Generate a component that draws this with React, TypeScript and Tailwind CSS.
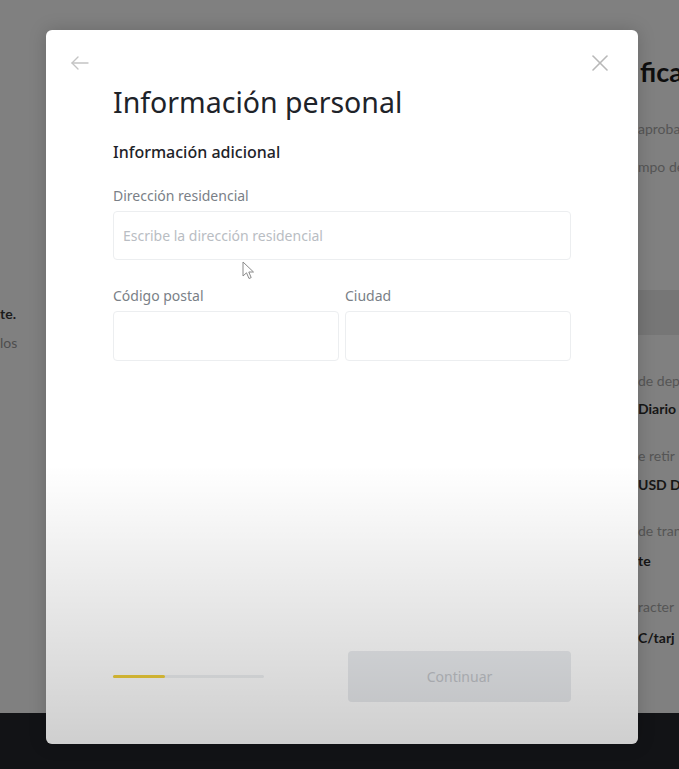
import React from "react";

const bgFont = { fontFamily: "Lato, 'Noto Sans', sans-serif" };
const uiFont = { fontFamily: "'Noto Sans', Inter, sans-serif" };

function BackArrow() {
  return (
    <svg width="24" height="24" viewBox="0 0 24 24" fill="none" stroke="#c4c4c4" strokeWidth="1.4" strokeLinecap="round" strokeLinejoin="round">
      <path d="M20 12H4" />
      <path d="M10 6l-6 6 6 6" />
    </svg>
  );
}

function CloseIcon() {
  return (
    <svg width="24" height="24" viewBox="0 0 24 24" fill="none" stroke="#b8b8b8" strokeWidth="1.6" strokeLinecap="round">
      <path d="M5 5l14 14" />
      <path d="M19 5L5 19" />
    </svg>
  );
}

function Cursor() {
  return (
    <svg width="14" height="20" viewBox="0 0 14 20">
      <path d="M1 1 L1 15 L4.5 11.8 L7 17.5 L9.2 16.6 L6.8 11 L11.5 11 Z" fill="#ffffff" stroke="#8a8a8a" strokeWidth="1" strokeLinejoin="round" />
    </svg>
  );
}

export default function App() {
  return (
    <div className="relative w-[679px] h-[769px] overflow-hidden flex flex-col" style={bgFont}>
      {/* background page (dimmed) */}
      <div className="relative flex-1 bg-[#808080] flex justify-between">
        <div className="pt-[304px] flex flex-col w-[40px]">
          <span className="text-[14px] leading-[20px] font-bold text-[#1c1c1c]">te.</span>
          <span className="mt-[9px] text-[14px] leading-[20px] text-[#4e4e4e]">los</span>
        </div>
        <div className="w-[41px] flex flex-col pt-[55px] whitespace-nowrap">
          <span className="text-[27px] leading-[34px] font-bold text-[#0e0e0e] pl-[2px]">fica</span>
          <span className="mt-[30px] text-[14px] leading-[20px] text-[#555]">aproba</span>
          <span className="mt-[18px] text-[14px] leading-[20px] text-[#555]">mpo de</span>
          <div className="mt-[113px] h-[45px] w-[41px] bg-[#767676]" />
          <span className="mt-[36px] text-[14px] leading-[20px] text-[#555]">de dep</span>
          <span className="mt-[8px] text-[14px] leading-[20px] font-bold text-[#161616]">Diario</span>
          <span className="mt-[27px] text-[14px] leading-[20px] text-[#555]">e retir</span>
          <span className="mt-[9px] text-[14px] leading-[20px] font-bold text-[#161616]">USD Di</span>
          <span className="mt-[26px] text-[14px] leading-[20px] text-[#555]">de tran</span>
          <span className="mt-[10px] text-[14px] leading-[20px] font-bold text-[#161616]">te</span>
          <span className="mt-[26px] text-[14px] leading-[20px] text-[#555]">racter</span>
          <span className="mt-[11px] text-[14px] leading-[20px] font-bold text-[#161616]">C/tarj</span>
        </div>
      </div>
      <div className="h-[56px] bg-[#121316]" />

      {/* modal */}
      <div
        className="absolute left-[46px] top-[30px] w-[592px] h-[714px] rounded-[6px] bg-white flex flex-col shadow-[0_0_18px_rgba(0,0,0,0.18)] overflow-hidden"
        style={uiFont}
      >
        <div className="mt-[21px] pl-[22px] pr-[26px] h-[24px] flex items-center justify-between">
          <BackArrow />
          <CloseIcon />
        </div>
        <div className="px-[67px] flex flex-col">
          <h1 className="mt-[8px] text-[28.5px] leading-[38px] font-normal text-[#1e2329]">Información personal</h1>
          <h2 className="mt-[19px] text-[16px] leading-[24px] font-medium text-[#1e2329]">Información adicional</h2>

          <label className="mt-[22px] text-[14px] leading-[20px] text-[#7a7f87]">Dirección residencial</label>
          <div className="relative mt-[5px] h-[49px] rounded-[4px] border border-[#eceef0] flex items-center px-[9px]">
            <span className="text-[14px] text-[#b9bdc3]">Escribe la dirección residencial</span>
          </div>

          <div className="mt-[26px] grid grid-cols-2 gap-[6px]">
            <div className="flex flex-col">
              <label className="text-[14px] leading-[20px] text-[#7a7f87]">Código postal</label>
              <div className="mt-[5px] h-[50px] rounded-[4px] border border-[#eceef0]" />
            </div>
            <div className="flex flex-col">
              <label className="text-[14px] leading-[20px] text-[#7a7f87]">Ciudad</label>
              <div className="mt-[5px] h-[50px] rounded-[4px] border border-[#eceef0]" />
            </div>
          </div>
        </div>

        <div className="mt-auto mb-[42px] px-[67px] flex items-center justify-between">
          <div className="w-[151px] h-[3px] rounded-full bg-[#eef0f2] flex">
            <div className="w-[52px] h-[3px] rounded-full bg-[#f0cf3a]" />
          </div>
          <button className="w-[223px] h-[51px] rounded-[4px] bg-[#eaecef] text-[14px] text-[#c2c5ca]">Continuar</button>
        </div>

        {/* video fade overlay */}
        <div className="pointer-events-none absolute inset-0 bg-[linear-gradient(to_bottom,rgba(0,0,0,0)_61%,rgba(0,0,0,0.19)_100%)]" />
      </div>

      {/* mouse cursor */}
      <div className="absolute left-[242px] top-[261px]">
        <Cursor />
      </div>
    </div>
  );
}
